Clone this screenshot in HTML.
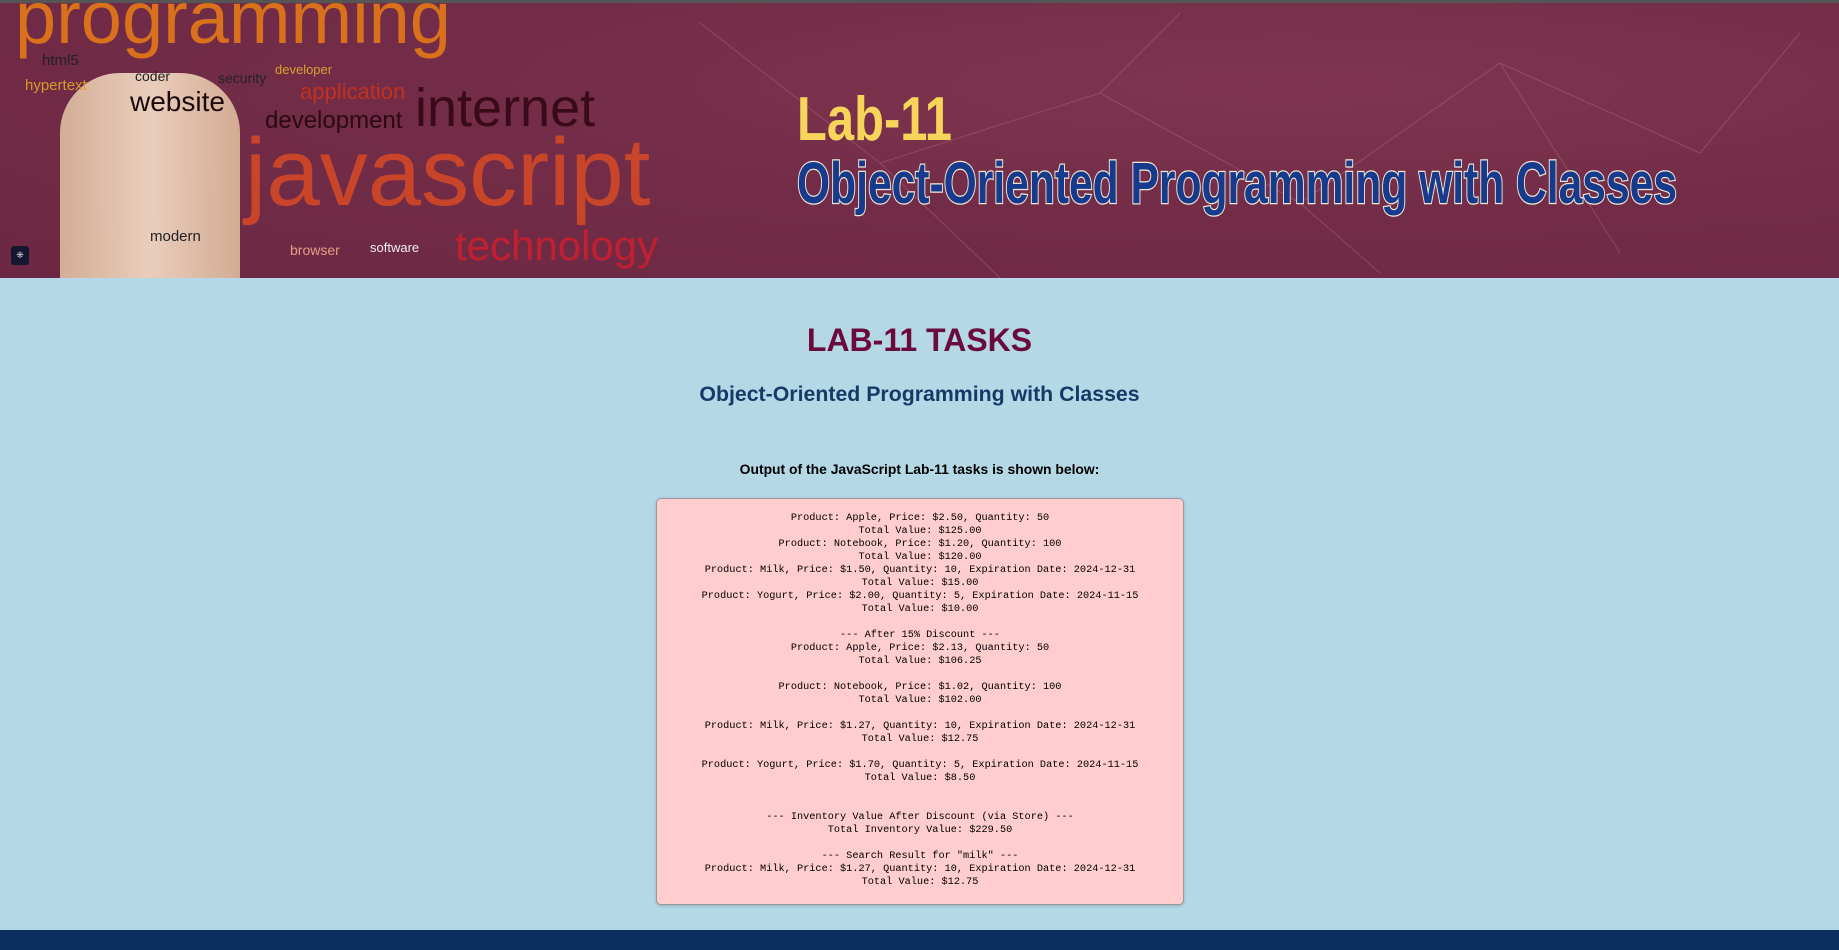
<!DOCTYPE html>
<html><head><meta charset="utf-8"><style>
html,body{margin:0;padding:0;}
body{width:1839px;height:950px;background:#b5d8e7;position:relative;overflow:hidden;font-family:"Liberation Sans",Arial,sans-serif;}
#hdr{position:absolute;left:0;top:0;width:1839px;height:278px;overflow:hidden;
background:radial-gradient(ellipse at 70% 30%,#7f3550 0%,#722c47 50%,#6c2843 100%);border-top:3px solid #555;box-sizing:border-box;}
#hdr .w{position:absolute;white-space:nowrap;font-family:"Liberation Sans",sans-serif;line-height:1;}
#hand{position:absolute;left:60px;top:70px;width:180px;height:210px;background:linear-gradient(90deg,#d9b49a,#f0d6c2 50%,#d8b298);border-radius:60px 60px 0 0;opacity:.95}
h1{position:absolute;top:322px;left:0;width:100%;margin:0;text-align:center;font-size:32px;color:#6b0a3c;font-weight:bold;}
h2{position:absolute;top:382px;left:0;width:100%;margin:0;text-align:center;font-size:21.3px;color:#153a66;font-weight:bold;}
p.o{position:absolute;top:461px;left:0;width:100%;margin:0;text-align:center;font-size:13.9px;font-weight:bold;color:#000;}
#box{position:absolute;left:656px;top:498px;width:526px;height:405px;background:#ffcdcd;border:1px solid #9a9a9a;border-radius:5px;box-shadow:0 1px 3px rgba(0,0,0,.2);}
#box pre{margin:0;padding-top:13px;text-align:center;font-family:"Liberation Mono","DejaVu Sans Mono",monospace;font-size:10.25px;line-height:13px;color:#000;}
#ftr{position:absolute;left:0;top:930px;width:1839px;height:20px;background:#0b2f5e;}
#btn{position:absolute;left:11px;top:246px;width:18px;height:19px;background:#161630;border-radius:3px;color:#fff;font-size:9px;text-align:center;line-height:19px;}
</style></head><body>
<div id="hdr">
<div id="hand"></div>
<div class="w" style="left:15px;top:-22px;font-size:74px;color:#d8701c;">programming</div>
<div class="w" style="left:42px;top:50px;font-size:15px;color:#222;">html5</div>
<div class="w" style="left:25px;top:75px;font-size:15px;color:#d79a2a;">hypertext</div>
<div class="w" style="left:135px;top:66px;font-size:14px;color:#222;">coder</div>
<div class="w" style="left:218px;top:68px;font-size:14px;color:#222;">security</div>
<div class="w" style="left:275px;top:60px;font-size:13px;color:#d8a030;">developer</div>
<div class="w" style="left:300px;top:78px;font-size:22px;color:#c23020;">application</div>
<div class="w" style="left:130px;top:85px;font-size:28px;color:#1a0a0a;">website</div>
<div class="w" style="left:265px;top:106px;font-size:24px;color:#2a0a10;">development</div>
<div class="w" style="left:415px;top:78px;font-size:54px;color:#3a0a18;">internet</div>
<div class="w" style="left:245px;top:122px;font-size:96px;color:#c9452a;">javascript</div>
<div class="w" style="left:150px;top:226px;font-size:15px;color:#222;">modern</div>
<div class="w" style="left:455px;top:222px;font-size:42px;color:#c02030;">technology</div>
<div class="w" style="left:370px;top:238px;font-size:13px;color:#eee;">software</div>
<div class="w" style="left:290px;top:240px;font-size:14px;color:#e0a080;">browser</div>
<svg style="position:absolute;left:0;top:0" width="1839" height="278">
<g stroke="#b06a85" stroke-width="1" opacity=".45" fill="none">
<path d="M700 20 L880 160 L1100 90 L1300 200 L1500 60 L1700 150"/>
<path d="M880 160 L1000 275 M1100 90 L1180 10 M1300 200 L1380 270 M1500 60 L1620 250 M1700 150 L1800 30"/>
</g>
<text x="797" y="137" font-family="Liberation Sans,sans-serif" font-weight="bold" font-size="62" fill="#f7d55a" textLength="155" lengthAdjust="spacingAndGlyphs">Lab-11</text>
<text x="797" y="200" font-family="Liberation Sans,sans-serif" font-weight="bold" font-size="58" fill="#163a8c" stroke="#f0e6d2" stroke-width="2.5" paint-order="stroke" textLength="880" lengthAdjust="spacingAndGlyphs">Object-Oriented Programming with Classes</text>
</svg>
</div>
<div id="btn">⁜</div>
<h1>LAB-11 TASKS</h1>
<h2>Object-Oriented Programming with Classes</h2>
<p class="o">Output of the JavaScript Lab-11 tasks is shown below:</p>
<div id="box"><pre>Product: Apple, Price: $2.50, Quantity: 50
Total Value: $125.00
Product: Notebook, Price: $1.20, Quantity: 100
Total Value: $120.00
Product: Milk, Price: $1.50, Quantity: 10, Expiration Date: 2024-12-31
Total Value: $15.00
Product: Yogurt, Price: $2.00, Quantity: 5, Expiration Date: 2024-11-15
Total Value: $10.00

--- After 15% Discount ---
Product: Apple, Price: $2.13, Quantity: 50
Total Value: $106.25

Product: Notebook, Price: $1.02, Quantity: 100
Total Value: $102.00

Product: Milk, Price: $1.27, Quantity: 10, Expiration Date: 2024-12-31
Total Value: $12.75

Product: Yogurt, Price: $1.70, Quantity: 5, Expiration Date: 2024-11-15
Total Value: $8.50


--- Inventory Value After Discount (via Store) ---
Total Inventory Value: $229.50

--- Search Result for "milk" ---
Product: Milk, Price: $1.27, Quantity: 10, Expiration Date: 2024-12-31
Total Value: $12.75</pre></div>
<div id="ftr"></div>
</body></html>
